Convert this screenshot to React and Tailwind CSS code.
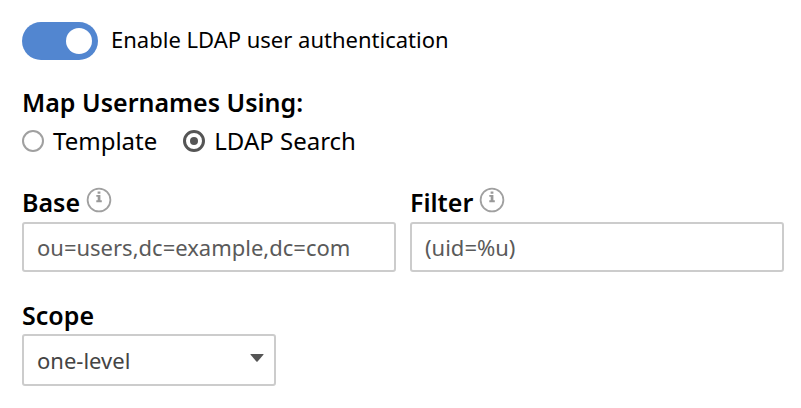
import { useState } from "react"

function InfoIcon() {
  return (
    <svg viewBox="0 0 26 26" className="size-[26px]" fill="none" aria-hidden="true">
      <circle cx="13" cy="13" r="11.4" stroke="#a0a0a0" strokeWidth="1.8" />
      <path d="M11.6 4.4h2.8v2.3h-2.8zM10.3 7.9h4.1v5.4h1.4v1.9h-5.5v-1.9h1.4v-3.5h-1.4z" fill="#999999" />
    </svg>
  )
}

function TextField({ id, label, value, onChange }) {
  return (
    <div>
      <div className="flex items-center gap-[6px] h-[38px]">
        <label htmlFor={id} className="text-[25px] font-semibold">{label}</label>
        <button type="button" aria-label={"About " + label} className="pb-[6px]">
          <InfoIcon />
        </button>
      </div>
      <input
        id={id}
        type="text"
        value={value}
        onChange={e => onChange(e.target.value)}
        className="block w-full h-[50px] border-2 border-[#cccccc] rounded-[3px] px-[13px] text-[22px] text-[#5a5a5a]"
      />
    </div>
  )
}

export default function App() {
  const [enabled, setEnabled] = useState(true)
  const [mapping, setMapping] = useState("search")
  const [base, setBase] = useState("ou=users,dc=example,dc=com")
  const [filter, setFilter] = useState("(uid=%u)")
  const [scope, setScope] = useState("one-level")

  return (
    <form className="bg-white text-black font-['Noto_Sans',sans-serif] text-2xl pt-[22px] pb-5 pl-[22px] pr-[17px]">
      <label className="flex items-start gap-[13px] text-[22px] leading-[34px]">
        <input
          type="checkbox"
          checked={enabled}
          onChange={e => setEnabled(e.target.checked)}
          className="appearance-none flex items-center w-[76px] h-[38px] rounded-full bg-gray-300 px-[6px] before:size-[26px] before:rounded-full before:bg-white checked:bg-[#5286d0] checked:justify-end"
        />
        Enable LDAP user authentication
      </label>

      <fieldset className="mt-6">
        <legend className="text-[25px] font-semibold leading-9">Map Usernames Using:</legend>
        <div className="flex gap-[26px] leading-[42px]">
          <label className="flex items-center gap-[9px]">
            <input
              type="radio"
              name="mapping"
              checked={mapping === "template"}
              onChange={() => setMapping("template")}
              className="appearance-none size-[22px] rounded-full border-2 border-[#a0a0a0] grid place-items-center checked:border-[3px] checked:border-[#555555] checked:before:size-2 checked:before:rounded-full checked:before:bg-[#555555]"
            />
            Template
          </label>
          <label className="flex items-center gap-[9px]">
            <input
              type="radio"
              name="mapping"
              checked={mapping === "search"}
              onChange={() => setMapping("search")}
              className="appearance-none size-[22px] rounded-full border-2 border-[#a0a0a0] grid place-items-center checked:border-[3px] checked:border-[#555555] checked:before:size-2 checked:before:rounded-full checked:before:bg-[#555555]"
            />
            LDAP Search
          </label>
        </div>
      </fieldset>

      <div className="grid grid-cols-2 gap-[14px] mt-[22px]">
        <TextField id="base" label="Base" value={base} onChange={setBase} />
        <TextField id="filter" label="Filter" value={filter} onChange={setFilter} />
      </div>

      <div className="mt-6 w-[254px]">
        <label htmlFor="scope" className="block text-[25px] font-semibold leading-[38px]">Scope</label>
        <div className="grid items-center">
          <select
            id="scope"
            value={scope}
            onChange={e => setScope(e.target.value)}
            className="appearance-none col-start-1 row-start-1 w-full h-[52px] bg-white border-2 border-[#cccccc] rounded-[3px] px-[13px] pt-[2px] text-[22px] text-[#444444]"
          >
            <option>base</option>
            <option>one-level</option>
            <option>subtree</option>
          </select>
          <svg viewBox="0 0 14 8" className="col-start-1 row-start-1 justify-self-end mr-3 mb-1 w-[14px] h-2 pointer-events-none" aria-hidden="true">
            <path d="M1 0h12q1 0 .4 .8L7.6 7.4q-.6 .6-1.2 0L.6 .8Q0 0 1 0z" fill="#555555" />
          </svg>
        </div>
      </div>
    </form>
  )
}
